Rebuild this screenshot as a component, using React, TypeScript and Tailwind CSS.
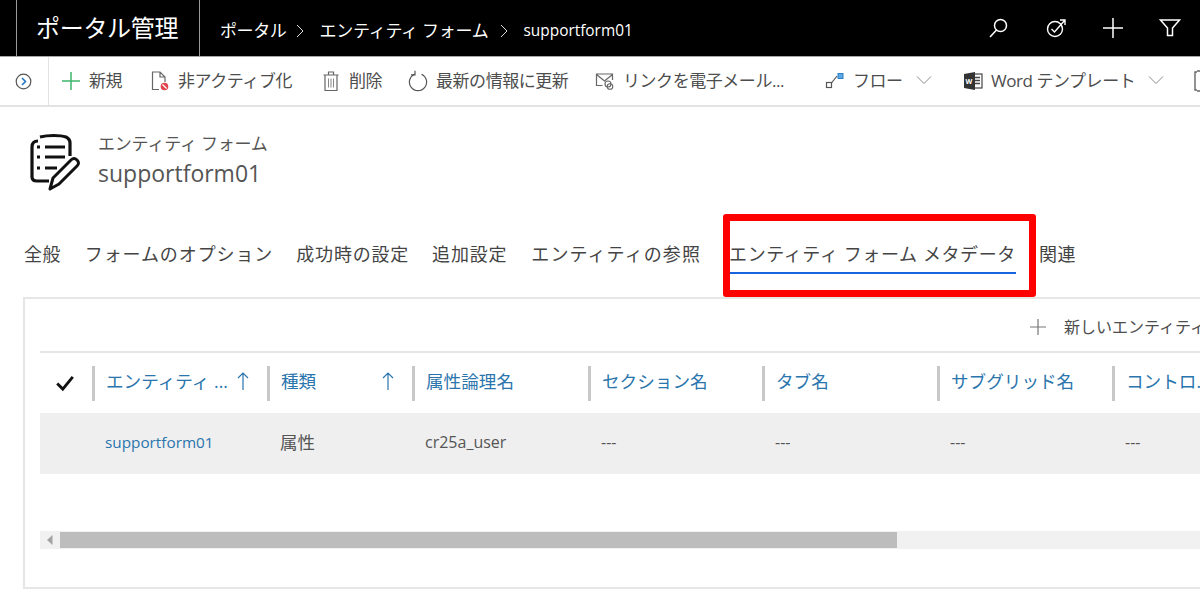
import React from "react";

const S = ({ w = 20, h = 20, vb = "0 0 20 20", children, className = "" }: { w?: number; h?: number; vb?: string; children: React.ReactNode; className?: string }) => (
  <svg width={w} height={h} viewBox={vb} fill="none" className={`shrink-0 ${className}`}>{children}</svg>
);

function ToolItem({ icon, label, width, chevronRight }: { icon: React.ReactNode; label: string; width: number; chevronRight?: number }) {
  return (
    <div className="flex items-center shrink-0 h-full" style={{ width }}>
      <div className="w-[20px] flex justify-center shrink-0 mr-[8px]">{icon}</div>
      <span className="text-[17px] text-[#4d4d4d] whitespace-nowrap tracking-[-0.45px] -mt-[1px]">{label}</span>
      {chevronRight !== undefined && (
        <S w={16} h={10} vb="0 0 16 10" className="ml-auto -mt-[2px]">
          <path d="M1 1.5l7 7 7-7" stroke="#8a8a8a" strokeWidth="1" />
        </S>
      )}
      {chevronRight ? <div className="shrink-0" style={{ width: chevronRight }} /> : null}
    </div>
  );
}

const columns = [
  { label: "エンティティ ...", w: 175, arrow: true, value: "supportform01", link: true },
  { label: "種類", w: 145, arrow: true, value: "属性", cjk: true },
  { label: "属性論理名", w: 176, value: "cr25a_user" },
  { label: "セクション名", w: 174, value: "---" },
  { label: "タブ名", w: 175, value: "---" },
  { label: "サブグリッド名", w: 175, value: "---" },
  { label: "コントロ...", w: 175, value: "---" },
];

export default function App() {
  return (
    <div className="w-[1200px] h-[613px] overflow-hidden bg-white text-[#444]" style={{ fontFamily: "'Open Sans','Noto Sans CJK JP',sans-serif" }}>
      {/* top bar */}
      <div className="h-[57px] bg-black border-b border-[#a8a8a8] flex items-stretch text-white">
        <div className="ml-[16px] w-[184px] border-x border-[#9a9a9a] flex items-center pl-[19px] text-[24px] whitespace-nowrap tracking-[-0.3px]">ポータル管理</div>
        <div className="flex items-center pl-[20px] text-[17px] whitespace-nowrap pt-[6px]">
          <span className="tracking-[-0.4px]">ポータル</span>
          <S w={12} h={14} vb="0 0 12 14" className="ml-[8px] mr-[13px]"><path d="M3 1l6 6-6 6" stroke="#ddd" strokeWidth="1" /></S>
          <span className="tracking-[-0.25px]">エンティティ フォーム</span>
          <S w={12} h={14} vb="0 0 12 14" className="ml-[9px] mr-[14px]"><path d="M3 1l6 6-6 6" stroke="#ddd" strokeWidth="1" /></S>
          <span className="text-[15.4px]">supportform01</span>
        </div>
        <div className="ml-auto flex items-center pr-[19px] gap-[36px] pb-[1px]">
          <S w={22} h={22} vb="0 0 22 22"><circle cx="13.5" cy="8.5" r="6" stroke="#fff" strokeWidth="1.5" /><path d="M9.5 13L3 20" stroke="#fff" strokeWidth="1.6" /></S>
          <S w={22} h={22} vb="0 0 22 22"><circle cx="10" cy="12" r="7.5" stroke="#fff" strokeWidth="1.4" /><path d="M6.5 12l3 3L20 3M15 3h5v5" stroke="#fff" strokeWidth="1.4" /></S>
          <S w={20} h={20} vb="0 0 20 20"><path d="M10 0v20M0 10h20" stroke="#fff" strokeWidth="1.5" /></S>
          <S w={22} h={20} vb="0 0 22 20"><path d="M1.5 2h19L13.5 10V17.5H8.5V10z" stroke="#fff" strokeWidth="1.5" /></S>
        </div>
      </div>

      {/* toolbar */}
      <div className="h-[50px] border-b-[2px] border-[#e3e3e3] flex items-stretch overflow-hidden">
        <div className="w-[49px] shrink-0 border-r border-[#e3e3e3] flex items-center justify-center pr-[2px]">
          <S w={17} h={17} vb="0 0 17 17"><circle cx="8.5" cy="8.5" r="7.3" stroke="#555" strokeWidth="1.2" /><path d="M7 5l3.5 3.5L7 12" stroke="#1a73c8" strokeWidth="1.5" /></S>
        </div>
        <div className="flex items-center pl-[12px]">
          <ToolItem width={89} label="新規" icon={<S w={20} h={20} vb="0 0 20 20"><path d="M10 1v18M1 10h18" stroke="#3fb56b" strokeWidth="1.5" /></S>} />
          <ToolItem width={171} label="非アクティブ化" icon={<S w={20} h={22} vb="0 0 20 22"><path d="M9 19.5H2.5V2H10l5 5v5M10 2v5h5" stroke="#666" strokeWidth="1.2" /><circle cx="14.5" cy="16.5" r="3.8" fill="#e0434b" /><path d="M12.5 14.5l4 4" stroke="#fff" strokeWidth="1.2" /></S>} />
          <ToolItem width={87} label="削除" icon={<S w={18} h={22} vb="0 0 18 22"><path d="M3 5.5v15h12v-15M1.5 5h15M6.5 5V2h5v3" stroke="#666" strokeWidth="1.2" /><path d="M6.5 8.5v9M9 8.5v9M11.5 8.5v9" stroke="#888" strokeWidth="1" /></S>} />
          <ToolItem width={187} label="最新の情報に更新" icon={<S w={20} h={22} vb="0 0 20 22"><path d="M13.5 4.2a8.6 8.6 0 1 1-7 0" stroke="#555" strokeWidth="1.2" /><path d="M7 0.8v4h-4" stroke="#555" strokeWidth="1.2" /></S>} />
          <ToolItem width={230} label="リンクを電子メール..." icon={<S w={20} h={18} vb="0 0 20 18"><path d="M7.5 13.5H1.5V2h16v6M1.5 2.5L9.5 9l8-6.5" stroke="#666" strokeWidth="1.2" /><circle cx="13" cy="12" r="3" stroke="#666" strokeWidth="1.1" /><circle cx="15" cy="14.5" r="2.8" stroke="#666" strokeWidth="1.1" /></S>} />
          <ToolItem width={138} chevronRight={31} label="フロー" icon={<S w={20} h={18} vb="0 0 20 18"><rect x="1.5" y="10.5" width="5" height="5" stroke="#555" strokeWidth="1.2" /><path d="M6.5 11L12 4" stroke="#555" strokeWidth="1.2" /><rect x="13" y="1.5" width="5" height="5" fill="#5aa9e6" stroke="#2f7fc1" strokeWidth="1" /></S>} />
          <ToolItem width={201} chevronRight={0} label="Word テンプレート" icon={<S w={20} h={20} vb="0 0 20 20"><rect x="9" y="3" width="10" height="14" fill="#fff" stroke="#444" strokeWidth="1.2" /><path d="M12 6.5h5M12 9.5h5M12 12.5h5" stroke="#444" strokeWidth="1.4" /><path d="M1 3L12 1v18L1 17z" fill="#333" /><text x="2.5" y="12.5" fontSize="7" fill="#fff" fontWeight="700">W</text></S>} />
          <S w={20} h={22} vb="0 0 20 22" className="ml-[30px]"><path d="M3 2H1v18h2M3 1h14M3 21h14" stroke="#666" strokeWidth="1.4" /></S>
        </div>
      </div>

      {/* entity header */}
      <div className="flex pl-[29px] pt-[25px] h-[96px]">
        <S w={52} h={60} vb="0 0 52 60" className="mt-[1px]">
          <path d="M9 8C5 8 3 10 3 14v30c0 3 2 4 5 4h12M11 4c8-2 20-2 26 0 2 1 4 3 4 6v13" stroke="#111" strokeWidth="3.2" />
          <path d="M8 14h3M16 14h20M8 24h3M16 24h20M8 35h3M16 35h12" stroke="#111" strokeWidth="3.2" />
          <path d="M21 56l3-11 18-18c2-2 4-2 6 0s2 4 0 6L30 51z" fill="#fff" stroke="#111" strokeWidth="3" strokeLinejoin="round" />
        </S>
        <div className="ml-[17px] flex flex-col">
          <div className="text-[17px] leading-[24px] text-[#555] whitespace-nowrap tracking-[-0.2px]">エンティティ フォーム</div>
          <div className="text-[23px] leading-[32px] text-[#555] mt-[1px]">supportform01</div>
        </div>
      </div>

      {/* tabs */}
      <div className="h-[94px] pt-[37px] pl-[24px] flex items-start text-[18px] text-[#444] whitespace-nowrap leading-[28px]">
        <span className="tracking-[0.4px]">全般</span>
        <span className="ml-[24px] tracking-[0.9px]">フォームのオプション</span>
        <span className="ml-[23px] tracking-[0.8px]">成功時の設定</span>
        <span className="ml-[23px] tracking-[0.8px]">追加設定</span>
        <span className="ml-[24px] tracking-[1.1px]">エンティティの参照</span>
        <div className="relative ml-[28px] w-[287px]">
          <div className="border-b-[2px] border-[#1763e0] h-[34px] tracking-[0.6px]">エンティティ フォーム メタデータ</div>
          <div className="absolute -left-[6px] -right-[20px] -top-[26px] h-[83px] border-[7px] border-[#ff0000] rounded-[3px]" />
        </div>
        <span className="ml-[23px] tracking-[0.4px]">関連</span>
      </div>

      {/* panel */}
      <div className="ml-[23px] h-[292px] w-[1300px] border-2 border-[#e6e6e6] pl-[15px]">
        <div className="h-[52px] flex items-center pl-[989px] pt-[4px]">
          <S w={18} h={18} vb="0 0 18 18"><path d="M9 1v16M1 9h16" stroke="#777" strokeWidth="1.2" /></S>
          <span className="ml-[17px] text-[16px] text-[#4d4d4d] whitespace-nowrap">新しいエンティティ フォーム メタデータ</span>
        </div>
        <div className="border-t-2 border-[#e6e6e6] h-[62px] flex items-center">
          <div className="w-[52px] shrink-0 flex justify-center pr-[3px]">
            <S w={20} h={18} vb="0 0 18 16"><path d="M2 8.5l5 5L16 2.5" stroke="#111" strokeWidth="2.6" /></S>
          </div>
          {columns.map((c) => (
            <div key={c.label} className="shrink-0 h-[35px] flex items-center border-l-[3px] border-[#c8c8c8] pl-[11px]" style={{ width: c.w }}>
              <span className="text-[#2a75ad] text-[17.6px] whitespace-nowrap -mt-[4px]">{c.label}</span>
              {c.arrow && (
                <S w={14} h={20} vb="0 0 14 20" className="ml-auto mr-[17px] -mt-[4px]"><path d="M7 19V2M2 7l5-5 5 5" stroke="#2a75ad" strokeWidth="1.2" /></S>
              )}
            </div>
          ))}
        </div>
        <div className="bg-[#efefef] h-[61px] flex items-center">
          <div className="w-[53px] shrink-0" />
          {columns.map((c) => (
            <div key={c.label} className="shrink-0 pl-[12px] whitespace-nowrap pb-[3px]" style={{ width: c.w }}>
              <span className={c.link ? "text-[#2a75ad] text-[15.3px]" : c.cjk ? "text-[#555] text-[17.5px]" : "text-[#555] text-[16px]"}>{c.value}</span>
            </div>
          ))}
        </div>
        <div className="mt-[57px] h-[18px] w-[1160px] bg-[#f1f1f1] flex items-center">
          <div className="w-[20px] h-full flex items-center justify-center">
            <S w={6} h={10} vb="0 0 6 10"><path d="M5.5 0v10L0 5z" fill="#a3a3a3" /></S>
          </div>
          <div className="w-[837px] h-[16px] bg-[#bdbdbd]" />
        </div>
      </div>
    </div>
  );
}
